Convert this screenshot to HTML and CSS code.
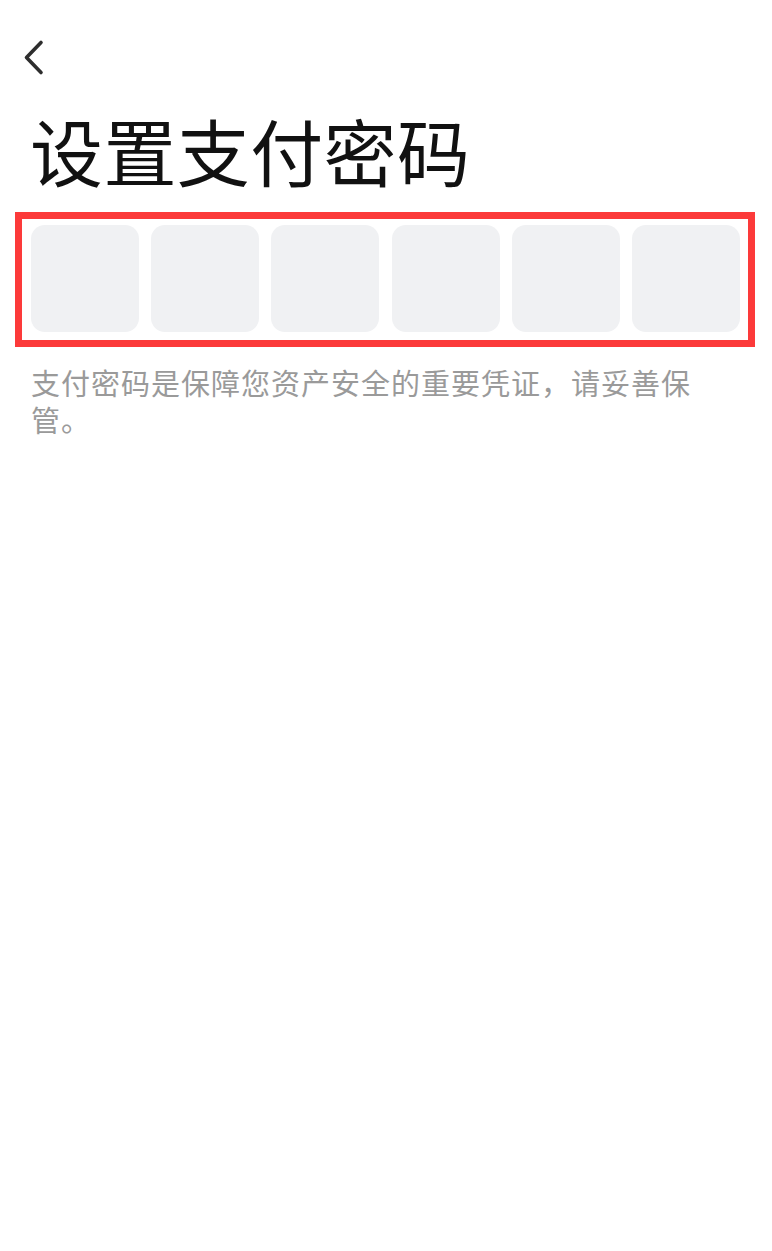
FILE: index.html
```html
<!DOCTYPE html>
<html lang="zh-CN">
<head>
<meta charset="utf-8">
<title>设置支付密码</title>
<link rel="stylesheet" href="styles.css">
</head>
<body>
<div class="page">
  <div class="header">
    <svg class="back" width="26" height="40" viewBox="0 0 26 40" aria-label="返回">
      <path d="M20 4.5 L5.5 19.5 L20 34.5" fill="none" stroke="#2e2e2e" stroke-width="3.6" stroke-linecap="round" stroke-linejoin="round"/>
    </svg>
  </div>
  <h1 class="title">设置支付密码</h1>
  <div class="code-frame">
    <div class="code-row">
      <div class="cell"></div>
      <div class="cell"></div>
      <div class="cell"></div>
      <div class="cell"></div>
      <div class="cell"></div>
      <div class="cell"></div>
    </div>
  </div>
  <p class="hint">支付密码是保障您资产安全的重要凭证，请妥善保管。</p>
</div>
</body>
</html>
```

FILE: styles.css
```css
html, body {
  margin: 0;
  padding: 0;
  background: #ffffff;
}
body {
  font-family: "Noto Sans CJK SC", "Noto Sans", sans-serif;
}
.page {
  width: 772px;
  min-height: 1251px;
}
.header {
  height: 76px;
  padding-left: 21px;
  padding-top: 38px;
  box-sizing: border-box;
  display: flex;
  align-items: flex-start;
}
.back {
  display: block;
}
.title {
  margin: 0;
  padding-left: 30px;
  font-size: 73px;
  letter-spacing: 0.4px;
  font-weight: 400;
  line-height: 72px;
  color: #111111;
  margin-top: 37px;
}
.code-frame {
  margin-top: 27px;
  margin-left: 15px;
  width: 740px;
  box-sizing: border-box;
  border: 7px solid #fc3a3a;
  padding: 6px 8px 8px 9px;
}
.code-row {
  display: flex;
  gap: 12.2px;
}
.cell {
  flex: 1;
  height: 107px;
  background: #f0f1f3;
  border-radius: 14px;
}
.hint {
  margin: 17px 0 0 0;
  padding: 0 32px 0 31px;
  font-size: 29px;
  letter-spacing: 1px;
  line-height: 37px;
  color: #9a9a9a;
}
```
